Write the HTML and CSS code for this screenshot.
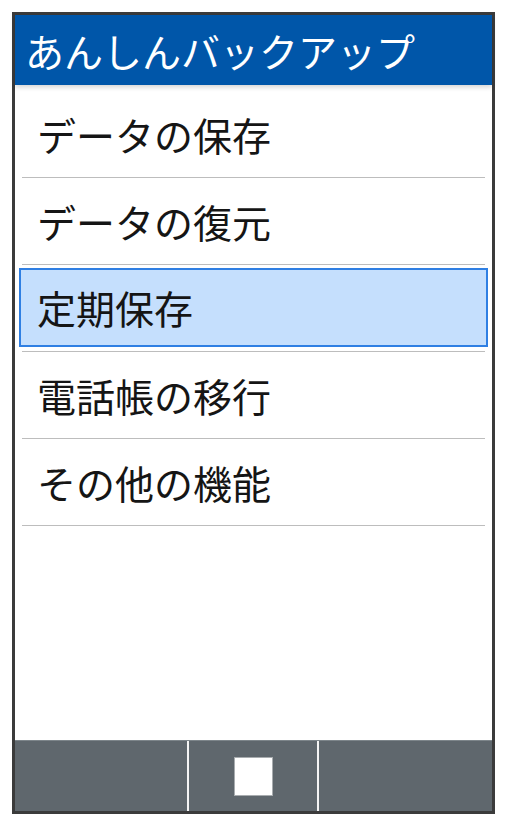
FILE: index.html
```html
<!DOCTYPE html>
<html lang="ja">
<head>
<meta charset="utf-8">
<link rel="stylesheet" href="styles.css">
</head>
<body>
<div class="phone">
  <div class="header">あんしんバックアップ</div>
  <div class="list">
    <div class="item"><span class="label">データの保存</span></div>
    <div class="item"><span class="label">データの復元</span></div>
    <div class="item selected"><div class="hl"><span class="label">定期保存</span></div></div>
    <div class="item"><span class="label">電話帳の移行</span></div>
    <div class="item"><span class="label">その他の機能</span></div>
  </div>
  <div class="softkeys">
    <div class="key key-side"></div>
    <div class="key key-mid"><span class="square"></span></div>
    <div class="key key-side"></div>
  </div>
</div>
</body>
</html>
```

FILE: styles.css
```css
html, body {
  margin: 0;
  padding: 0;
  background: #ffffff;
}
body {
  font-family: "Noto Sans CJK JP", "Noto Sans", sans-serif;
}
.phone {
  position: relative;
  margin: 12px 0 0 12px;
  width: 477px;
  height: 796px;
  border: 3px solid #3b3b3b;
  display: flex;
  flex-direction: column;
  background: #fff;
}
.header {
  height: 70px;
  flex: none;
  background: #0056a9;
  color: #fff;
  font-size: 39px;
  line-height: 1;
  display: flex;
  align-items: center;
  padding-left: 10px;
  box-shadow: 0 2px 5px rgba(0,0,0,0.18);
  position: relative;
  z-index: 1;
}
.list {
  flex: 1;
  padding-top: 6px;
}
.item {
  margin: 0 7px;
  height: 86px;
  border-bottom: 1px solid #bdbdbd;
  display: flex;
  align-items: center;
  padding-left: 15px;
  color: #151515;
  font-size: 39px;
  line-height: 1;
}
.item.selected {
  padding-left: 0;
  align-items: stretch;
}
.hl {
  flex: 1;
  margin: 3px -3px 4px;
  background: #c5dffd;
  border: 2px solid #2f7fe3;
  display: flex;
  align-items: center;
  padding-left: 16px;
}
.softkeys {
  flex: none;
  height: 70px;
  display: flex;
  background: #5f676d;
  border-top: 1px solid #7d858a;
}
.key {
  display: flex;
  align-items: center;
  justify-content: center;
}
.key-side {
  width: 172px;
}
.key-mid {
  width: 128px;
  border-left: 2px solid #f4f4f4;
  border-right: 2px solid #f4f4f4;
}
.square {
  width: 37px;
  height: 37px;
  background: #fff;
  border: 1px solid #a8acaf;
}
```
